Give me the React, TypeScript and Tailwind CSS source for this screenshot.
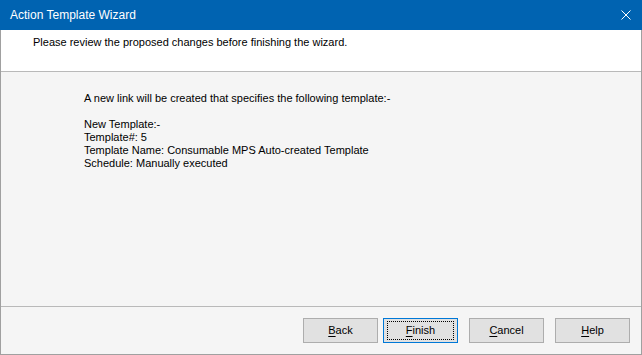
import React from "react";

const font = { fontFamily: '"Liberation Sans", Arial, sans-serif' };

function Btn({ label, u, focus }: { label: string; u: number; focus?: boolean }) {
  return (
    <button
      className={`w-[75px] h-[25px] bg-[#e1e1e1] text-[11px] text-black flex items-center justify-center border ${
        focus ? "border-[#0078d7]" : "border-[#adadad]"
      }`}
    >
      <span
        className={`h-[19px] w-[67px] flex items-center justify-center ${
          focus ? "border border-dotted border-black" : ""
        }`}
      >
        {label.slice(0, u)}
        <span className="underline underline-offset-2">{label[u]}</span>
        {label.slice(u + 1)}
      </span>
    </button>
  );
}

export default function App() {
  return (
    <div className="w-[642px] h-[355px] flex flex-col bg-[#f5f5f5] text-black" style={font}>
      {/* Title bar */}
      <div className="h-[30px] bg-[#0063b1] flex items-center justify-between pl-[10px] pr-[10px] shrink-0">
        <span className="text-white text-[12px]">Action Template Wizard</span>
        <svg width="10" height="10" viewBox="0 0 10 10" className="mr-[1px]">
          <path d="M0.5 0.5 L9.5 9.5 M9.5 0.5 L0.5 9.5" stroke="white" strokeWidth="1" />
        </svg>
      </div>

      <div className="flex-1 flex flex-col border-l border-r border-b border-[#a0a0a0]">
        {/* Header */}
        <div className="h-[42px] bg-white border-b border-[#b9b9b9] shrink-0 pt-[6px]">
          <div className="text-[11px] leading-[13px] pl-[32px]">
            Please review the proposed changes before finishing the wizard.
          </div>
        </div>

        {/* Body */}
        <div className="flex-1 border-b border-[#b9b9b9] pl-[83px] pt-[20px] text-[11px] leading-[13px]">
          <div>A new link will be created that specifies the following template:-</div>
          <div className="mt-[13px]">New Template:-</div>
          <div>Template#: 5</div>
          <div>Template Name: Consumable MPS Auto-created Template</div>
          <div>Schedule: Manually executed</div>
        </div>

        {/* Footer */}
        <div className="h-[47px] shrink-0 flex justify-end items-start pt-[11px] pr-[11px]">
          <Btn label="Back" u={0} />
          <div className="ml-[5px]">
            <Btn label="Finish" u={0} focus />
          </div>
          <div className="ml-[11px]">
            <Btn label="Cancel" u={0} />
          </div>
          <div className="ml-[11px]">
            <Btn label="Help" u={0} />
          </div>
        </div>
      </div>
    </div>
  );
}
